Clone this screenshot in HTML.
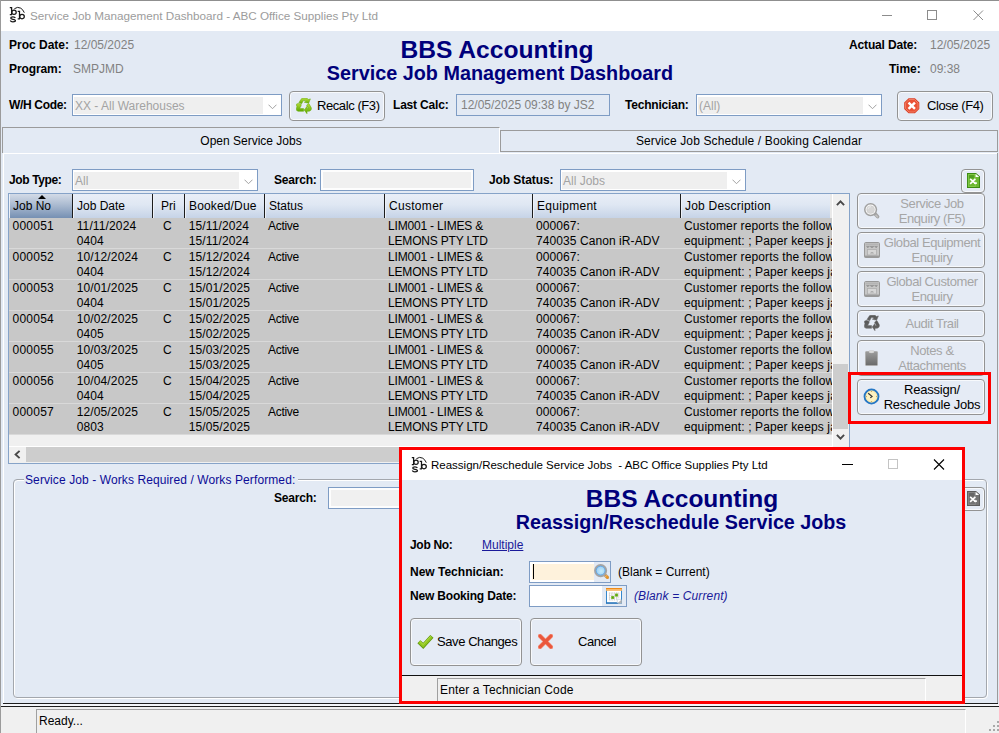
<!DOCTYPE html>
<html>
<head>
<meta charset="utf-8">
<title>Service Job Management Dashboard</title>
<style>
*{box-sizing:border-box;margin:0;padding:0}
html,body{width:999px;height:733px;overflow:hidden;background:#e3eaf4;font-family:"Liberation Sans",sans-serif;font-size:12px;color:#000}
.abs{position:absolute}
.t{position:absolute;white-space:nowrap;line-height:14px;font-size:12px}
.b{font-weight:bold}
.g{color:#828282}
.nv{color:#00007b}
#win{position:absolute;left:0;top:0;width:999px;height:733px;background:#e3eaf4;overflow:hidden}
.combo{position:absolute;height:22px;border:1px solid #7e9cc4;background:#fff}
.combo .in{position:absolute;left:1px;top:2px;bottom:1px;right:18px;background:#efefef}
.combo .tx{position:absolute;left:2px;top:4px;color:#a3a3a3;font-size:12px;line-height:14px;white-space:nowrap}
.combo svg{position:absolute;right:4px;top:9px}
.tbx{position:absolute;height:22px;border:1px solid #7e9cc4;background:#f0f0f0;box-shadow:inset 0 0 0 2px #fdfdfd}
.btn{position:absolute;border:1px solid #939393;border-radius:4px;background:#e5ebf5;box-shadow:inset 0 0 0 1px #f7f9fc}
.bt{position:absolute;white-space:nowrap;font-size:13px;line-height:15px;letter-spacing:-0.42px;text-align:center}
.dis{color:#a6a6a6}
.hd{position:absolute;top:0;height:24px;background:linear-gradient(#e9eef7 0%,#dfe7f3 45%,#c6d3e7 100%);border-right:1px solid #1c1c1c}
.hd span{position:absolute;left:4px;top:5px;font-size:12px;line-height:14px;white-space:nowrap}
.hd:after{content:"";position:absolute;left:0;top:0;width:1px;height:24px;background:#edf1f8}
.row{position:absolute;left:0;width:823px;height:31px;background:#c8c8c8;border-bottom:1px solid #d9d9d9}
.c{position:absolute;top:1px;font-size:12px;line-height:15px;white-space:nowrap}
</style>
</head>
<body>
<div id="win">
<div class="abs" style="left:0;top:0;width:999px;height:31px;background:#fff"></div>
<div class="abs" style="left:0;top:0;width:999px;height:1px;background:#8f8f8f"></div>
<div class="abs" style="left:0;top:0;width:1px;height:733px;background:#9b9b9b"></div>
<svg class="abs" style="left:9px;top:6px" width="18" height="18" viewBox="0 0 18 18"><g fill="none" stroke="#161616" stroke-width="1.25" stroke-linecap="butt"><path d="M0.8 1.6 H2.6 V8.5 M0.8 8.5 H3.0"/><ellipse cx="5.0" cy="6.3" rx="2.2" ry="2.15"/><path d="M6.3 12.0 Q5.9 10.9 3.9 10.9 Q1.7 10.9 1.7 12.1 Q1.7 13.1 3.9 13.3 Q6.4 13.5 6.4 14.7 Q6.4 15.8 3.9 15.8 Q1.8 15.8 1.3 14.5"/><path d="M8.7 5.3 H10.5 V12.8 M8.7 12.8 H10.9"/><ellipse cx="13.0" cy="10.6" rx="2.3" ry="2.15"/></g><path d="M5.4 2.7 Q8.6 0.3 11.8 2.2 Q14.2 3.8 15.3 6.7" fill="none" stroke="#161616" stroke-width="1.0"/></svg>
<div class="t" style="left:30px;top:8px;color:#9c9c9c;font-size:11.7px;line-height:16px">Service Job Management Dashboard - ABC Office Supplies Pty Ltd</div>
<svg class="abs" style="left:880px;top:8px" width="110" height="16" viewBox="0 0 110 16"><g fill="none" stroke="#8c8c8c" stroke-width="1"><path d="M2 7.5 H12"/><rect x="47.5" y="2.5" width="9" height="9"/><path d="M93.5 2.5 L103 12 M103 2.5 L93.5 12"/></g></svg>
<div class="t b" style="left:9px;top:38px">Proc Date:</div>
<div class="t g" style="left:74px;top:38px">12/05/2025</div>
<div class="t b" style="left:9px;top:62px;letter-spacing:-0.1px">Program:</div>
<div class="t g" style="left:73px;top:62px">SMPJMD</div>
<div class="t b nv" style="left:297px;width:400px;text-align:center;top:36px;font-size:24.6px;line-height:28px">BBS Accounting</div>
<div class="t b nv" style="left:300px;width:400px;text-align:center;top:61px;font-size:19.8px;line-height:24px">Service Job Management Dashboard</div>
<div class="t b" style="left:849px;top:38px;letter-spacing:-0.15px">Actual Date:</div>
<div class="t g" style="left:930px;top:38px">12/05/2025</div>
<div class="t b" style="left:889px;top:62px">Time:</div>
<div class="t g" style="left:930px;top:62px">09:38</div>
<div class="t b" style="left:9px;top:98px;letter-spacing:-0.33px">W/H Code:</div>
<div class="combo" style="left:72px;top:94px;width:210px"><div class="in"></div><div class="tx">XX - All Warehouses</div><svg width="9" height="6" viewBox="0 0 9 6"><path d="M0.5 0.7 L4.5 4.7 L8.5 0.7" fill="none" stroke="#a2a2a2" stroke-width="1"/></svg></div>
<div class="btn" style="left:289px;top:91px;width:96px;height:30px"></div>
<svg class="abs" style="left:296px;top:98px" width="16" height="16" viewBox="0 0 16 16"><defs><linearGradient id="rg1" x1="0" y1="0" x2="0" y2="1"><stop offset="0" stop-color="#b5dc3a"/><stop offset="1" stop-color="#5fa800"/></linearGradient></defs><g fill="url(#rg1)" stroke="#5fa800" stroke-width="0.5" stroke-linejoin="round"><path d="M3.0 4.6 L4.9 1.4 Q5.6 0.3 6.9 0.3 L11.2 0.3 L12.3 1.5 L14.4 0.9 L12.6 5.3 L8.3 4.2 L9.7 3.3 L9.0 2.6 L7.4 2.6 L5.6 5.8 Z"/><path d="M2.4 5.2 L5.3 6.6 L5.0 8.0 L3.6 10.6 L7.6 10.6 L7.6 13.3 L2.2 13.3 Q0.2 13.1 0.3 11.0 L0.9 8.6 L0.2 6.4 Z"/><path d="M12.9 5.6 L15.2 9.6 Q15.9 11.1 14.8 12.3 Q14.0 13.3 12.6 13.3 L11.0 13.3 L11.0 15.7 L8.2 12.0 L11.0 8.4 L11.0 10.6 L12.4 10.6 L10.6 7.2 Z"/></g></svg>
<div class="bt" style="left:317px;top:98px">Recalc (F3)</div>
<div class="t b" style="left:393px;top:98px;letter-spacing:-0.19px">Last Calc:</div>
<div class="tbx" style="left:456px;top:94px;width:154px;background:#e3eaf4;box-shadow:none"><div class="t g" style="left:4px;top:3px">12/05/2025 09:38 by JS2</div></div>
<div class="t b" style="left:625px;top:98px;letter-spacing:-0.2px">Technician:</div>
<div class="combo" style="left:696px;top:94px;width:186px"><div class="in"></div><div class="tx">(All)</div><svg width="9" height="6" viewBox="0 0 9 6"><path d="M0.5 0.7 L4.5 4.7 L8.5 0.7" fill="none" stroke="#a2a2a2" stroke-width="1"/></svg></div>
<div class="btn" style="left:897px;top:91px;width:96px;height:30px"></div>
<svg class="abs" style="left:904px;top:98px" width="15.5" height="15.5" viewBox="0 0 16 16"><path d="M4.7 0.2 H11.3 L15.8 4.7 V11.3 L11.3 15.8 H4.7 L0.2 11.3 V4.7 Z" fill="#dc3e23"/><path d="M5.2 1.5 H10.8 L14.5 5.2 V10.8 L10.8 14.5 H5.2 L1.5 10.8 V5.2 Z" fill="#ea5236" stroke="#f49783" stroke-width="0.7"/><path d="M4.7 4.7 L11.3 11.3 M11.3 4.7 L4.7 11.3" stroke="#fff" stroke-width="2.5" stroke-linecap="butt"/></svg>
<div class="bt" style="left:927px;top:98px">Close (F4)</div>
<div class="abs" style="left:2px;top:127px;width:498px;height:26px;border:1px solid #9b9b9b;border-bottom:none;border-right:1px solid #fff;background:#e3eaf4"></div>
<div class="abs" style="left:500px;top:130px;width:498px;height:22px;border:1px solid #9b9b9b;background:#e3eaf4"></div>
<div class="t" style="left:2px;width:498px;text-align:center;top:134px">Open Service Jobs</div>
<div class="t" style="left:500px;width:498px;text-align:center;top:134px;letter-spacing:0.12px">Service Job Schedule / Booking Calendar</div>
<div class="abs" style="left:3px;top:153px;width:994px;height:1px;background:#fff"></div>
<div class="abs" style="left:3px;top:153px;width:1px;height:550px;background:#fff"></div>
<div class="abs" style="left:997px;top:153px;width:1px;height:550px;background:#9b9b9b"></div>
<div class="abs" style="left:3px;top:703px;width:995px;height:1px;background:#1e1e1e"></div>
<div class="t b" style="left:9px;top:173px;letter-spacing:-0.37px">Job Type:</div>
<div class="combo" style="left:72px;top:169px;width:186px"><div class="in"></div><div class="tx">All</div><svg width="9" height="6" viewBox="0 0 9 6"><path d="M0.5 0.7 L4.5 4.7 L8.5 0.7" fill="none" stroke="#a2a2a2" stroke-width="1"/></svg></div>
<div class="t b" style="left:274px;top:173px;letter-spacing:-0.2px">Search:</div>
<div class="tbx" style="left:320px;top:169px;width:154px"></div>
<div class="t b" style="left:489px;top:173px;letter-spacing:-0.08px">Job Status:</div>
<div class="combo" style="left:560px;top:169px;width:186px"><div class="in"></div><div class="tx">All Jobs</div><svg width="9" height="6" viewBox="0 0 9 6"><path d="M0.5 0.7 L4.5 4.7 L8.5 0.7" fill="none" stroke="#a2a2a2" stroke-width="1"/></svg></div>
<div class="btn" style="left:961px;top:169px;width:24px;height:24px"></div>
<svg class="abs" style="left:967px;top:173px" width="13" height="15" viewBox="0 0 14 16"><path d="M0.5 0.5 H9.5 L13.5 4.0 V15.5 H0.5 Z" fill="#6cb832" stroke="#3b8a12" stroke-width="1.1"/><rect x="2.2" y="2.2" width="5.2" height="3.6" fill="#3b8a12" opacity="0.55"/><path d="M1.5 1.5 H9 V14.5 H1.5 Z" fill="none" stroke="#8ed052" stroke-width="0.8" opacity="0.9"/><path d="M9.3 0.8 L13.2 4.2 H9.3 Z" fill="#fff"/><path d="M3.4 6.2 L9.4 11.6 M9.0 6.2 L3.4 11.6" stroke="#fff" stroke-width="1.7"/><path d="M7.5 10.8 H10.8" stroke="#fff" stroke-width="1.6"/></svg>
<div class="abs" style="left:8px;top:193px;width:842px;height:271px;border:1px solid #86a3c8;background:#f0f0f0"></div>
<div class="abs" id="grid" style="left:9px;top:194px;width:823px;height:252px;overflow:hidden">
<div class="hd" style="left:0px;width:64px;background:linear-gradient(#d3dbe7 0%,#aebdd2 42%,#7690b3 100%)"><span style="left:4px">Job No</span></div>
<div class="hd" style="left:64px;width:80px"><span>Job Date</span></div>
<div class="hd" style="left:144px;width:32px"><span style="left:8px">Pri</span></div>
<div class="hd" style="left:176px;width:80px"><span style="letter-spacing:0.15px">Booked/Due</span></div>
<div class="hd" style="left:256px;width:120px"><span>Status</span></div>
<div class="hd" style="left:376px;width:148px"><span style="letter-spacing:0.3px">Customer</span></div>
<div class="hd" style="left:524px;width:148px"><span style="letter-spacing:0.29px">Equipment</span></div>
<div class="hd" style="left:672px;width:149px;border-right:none"><span style="letter-spacing:0.22px">Job Description</span></div>
<div class="abs" style="left:821px;top:0;width:2px;height:24px;background:#e9e9e9"></div>
<svg class="abs" style="left:29px;top:1px" width="8" height="4" viewBox="0 0 8 4"><path d="M0 4 L4 0 L8 4 Z" fill="#000"/></svg>
<div class="row" style="top:24px">
<span class="c" style="left:3.5px;letter-spacing:0.25px">000051</span>
<span class="c" style="left:67.7px;letter-spacing:0.13px">11/11/2024<br>0404</span>
<span class="c" style="left:154px">C</span>
<span class="c" style="left:179.7px;letter-spacing:0.13px">15/11/2024<br>15/11/2024</span>
<span class="c" style="left:259px;letter-spacing:-0.3px">Active</span>
<span class="c" style="left:379px;letter-spacing:-0.18px">LIM001 - LIMES &amp;<br>LEMONS PTY LTD</span>
<span class="c" style="left:527px;letter-spacing:0.08px">000067:<br>740035 Canon iR-ADV</span>
<span class="c" style="left:675px;letter-spacing:0.13px">Customer reports the following<br>equipment: ; Paper keeps jamming</span>
</div>
<div class="row" style="top:55px">
<span class="c" style="left:3.5px;letter-spacing:0.25px">000052</span>
<span class="c" style="left:67.7px;letter-spacing:0.13px">10/12/2024<br>0404</span>
<span class="c" style="left:154px">C</span>
<span class="c" style="left:179.7px;letter-spacing:0.13px">15/12/2024<br>15/12/2024</span>
<span class="c" style="left:259px;letter-spacing:-0.3px">Active</span>
<span class="c" style="left:379px;letter-spacing:-0.18px">LIM001 - LIMES &amp;<br>LEMONS PTY LTD</span>
<span class="c" style="left:527px;letter-spacing:0.08px">000067:<br>740035 Canon iR-ADV</span>
<span class="c" style="left:675px;letter-spacing:0.13px">Customer reports the following<br>equipment: ; Paper keeps jamming</span>
</div>
<div class="row" style="top:86px">
<span class="c" style="left:3.5px;letter-spacing:0.25px">000053</span>
<span class="c" style="left:67.7px;letter-spacing:0.13px">10/01/2025<br>0404</span>
<span class="c" style="left:154px">C</span>
<span class="c" style="left:179.7px;letter-spacing:0.13px">15/01/2025<br>15/01/2025</span>
<span class="c" style="left:259px;letter-spacing:-0.3px">Active</span>
<span class="c" style="left:379px;letter-spacing:-0.18px">LIM001 - LIMES &amp;<br>LEMONS PTY LTD</span>
<span class="c" style="left:527px;letter-spacing:0.08px">000067:<br>740035 Canon iR-ADV</span>
<span class="c" style="left:675px;letter-spacing:0.13px">Customer reports the following<br>equipment: ; Paper keeps jamming</span>
</div>
<div class="row" style="top:117px">
<span class="c" style="left:3.5px;letter-spacing:0.25px">000054</span>
<span class="c" style="left:67.7px;letter-spacing:0.13px">10/02/2025<br>0405</span>
<span class="c" style="left:154px">C</span>
<span class="c" style="left:179.7px;letter-spacing:0.13px">15/02/2025<br>15/02/2025</span>
<span class="c" style="left:259px;letter-spacing:-0.3px">Active</span>
<span class="c" style="left:379px;letter-spacing:-0.18px">LIM001 - LIMES &amp;<br>LEMONS PTY LTD</span>
<span class="c" style="left:527px;letter-spacing:0.08px">000067:<br>740035 Canon iR-ADV</span>
<span class="c" style="left:675px;letter-spacing:0.13px">Customer reports the following<br>equipment: ; Paper keeps jamming</span>
</div>
<div class="row" style="top:148px">
<span class="c" style="left:3.5px;letter-spacing:0.25px">000055</span>
<span class="c" style="left:67.7px;letter-spacing:0.13px">10/03/2025<br>0405</span>
<span class="c" style="left:154px">C</span>
<span class="c" style="left:179.7px;letter-spacing:0.13px">15/03/2025<br>15/03/2025</span>
<span class="c" style="left:259px;letter-spacing:-0.3px">Active</span>
<span class="c" style="left:379px;letter-spacing:-0.18px">LIM001 - LIMES &amp;<br>LEMONS PTY LTD</span>
<span class="c" style="left:527px;letter-spacing:0.08px">000067:<br>740035 Canon iR-ADV</span>
<span class="c" style="left:675px;letter-spacing:0.13px">Customer reports the following<br>equipment: ; Paper keeps jamming</span>
</div>
<div class="row" style="top:179px">
<span class="c" style="left:3.5px;letter-spacing:0.25px">000056</span>
<span class="c" style="left:67.7px;letter-spacing:0.13px">10/04/2025<br>0404</span>
<span class="c" style="left:154px">C</span>
<span class="c" style="left:179.7px;letter-spacing:0.13px">15/04/2025<br>15/04/2025</span>
<span class="c" style="left:259px;letter-spacing:-0.3px">Active</span>
<span class="c" style="left:379px;letter-spacing:-0.18px">LIM001 - LIMES &amp;<br>LEMONS PTY LTD</span>
<span class="c" style="left:527px;letter-spacing:0.08px">000067:<br>740035 Canon iR-ADV</span>
<span class="c" style="left:675px;letter-spacing:0.13px">Customer reports the following<br>equipment: ; Paper keeps jamming</span>
</div>
<div class="row" style="top:210px">
<span class="c" style="left:3.5px;letter-spacing:0.25px">000057</span>
<span class="c" style="left:67.7px;letter-spacing:0.13px">12/05/2025<br>0803</span>
<span class="c" style="left:154px">C</span>
<span class="c" style="left:179.7px;letter-spacing:0.13px">15/05/2025<br>15/05/2025</span>
<span class="c" style="left:259px;letter-spacing:-0.3px">Active</span>
<span class="c" style="left:379px;letter-spacing:-0.18px">LIM001 - LIMES &amp;<br>LEMONS PTY LTD</span>
<span class="c" style="left:527px;letter-spacing:0.08px">000067:<br>740035 Canon iR-ADV</span>
<span class="c" style="left:675px;letter-spacing:0.13px">Customer reports the following<br>equipment: ; Paper keeps jamming</span>
</div>
</div>
<div class="abs" style="left:832px;top:194px;width:1px;height:253px;background:#fff"></div>
<div class="abs" style="left:833px;top:194px;width:16px;height:253px;background:#f0f0f0"></div>
<div class="abs" style="left:833px;top:364px;width:15px;height:65px;background:#cdcdcd"></div>
<svg class="abs" style="left:836px;top:199px" width="9" height="7" viewBox="0 0 9 7"><path d="M0.9 6.2 L4.5 2.4 L8.1 6.2" fill="none" stroke="#484848" stroke-width="1.9"/></svg>
<svg class="abs" style="left:836px;top:434px" width="9" height="7" viewBox="0 0 9 7"><path d="M0.9 0.8 L4.5 4.6 L8.1 0.8" fill="none" stroke="#484848" stroke-width="1.9"/></svg>
<div class="abs" style="left:9px;top:446px;width:823px;height:1px;background:#fff"></div>
<div class="abs" style="left:9px;top:447px;width:840px;height:16px;background:#f0f0f0"></div>
<div class="abs" style="left:26px;top:447px;width:500px;height:15px;background:#cdcdcd"></div>
<svg class="abs" style="left:13px;top:450px" width="8" height="9" viewBox="0 0 8 9"><path d="M6.6 0.9 L2.6 4.5 L6.6 8.1" fill="none" stroke="#484848" stroke-width="1.9"/></svg>
<div class="btn" style="left:857px;top:193px;width:128px;height:36px"></div>
<svg class="abs" style="left:864px;top:203px" width="17" height="17" viewBox="0 0 17 17"><path d="M11.2 11.0 L13.6 13.6" stroke="#a3a3a3" stroke-width="3.6" stroke-linecap="round"/><path d="M12.0 12.4 L13.4 13.8" stroke="#c2c2c2" stroke-width="1.6" stroke-linecap="round"/><circle cx="6.6" cy="6.6" r="5.85" fill="#fbfbfb" stroke="#a1a1a1" stroke-width="1.5"/><circle cx="6.6" cy="6.6" r="3.9" fill="#d6d6d6" stroke="#c9c9c9" stroke-width="0.5"/><path d="M4.0 6.0 Q4.6 3.8 7.0 3.6" fill="none" stroke="#e6e6e6" stroke-width="1.1"/></svg>
<div class="bt dis" style="left:879px;width:106px;top:196px">Service Job<br>Enquiry (F5)</div>
<div class="btn" style="left:857px;top:232px;width:128px;height:36px"></div>
<svg class="abs" style="left:864px;top:242px" width="16" height="16" viewBox="0 0 16 16"><rect x="0.5" y="0.5" width="15" height="15" rx="1.2" fill="#c6c6c6" stroke="#989898"/><rect x="1.5" y="1.5" width="13" height="2" fill="#b4b4b4"/><path d="M2 4.2 H14 L12.2 6 L10.4 4.6 L8 6 L5.6 4.6 L3.8 6 Z" fill="#8a8a8a"/><rect x="3.5" y="7.5" width="9" height="5.5" fill="#d6d6d6" stroke="#adadad" stroke-width="0.8"/><path d="M6 11.5 Q8 8.6 10 11.5 Z" fill="#a8a8a8"/><rect x="0.5" y="13.6" width="15" height="1.9" fill="#9a9a9a"/></svg>
<div class="bt dis" style="left:879px;width:106px;top:235px">Global Equipment<br>Enquiry</div>
<div class="btn" style="left:857px;top:271px;width:128px;height:36px"></div>
<svg class="abs" style="left:864px;top:281px" width="16" height="16" viewBox="0 0 16 16"><rect x="0.5" y="0.5" width="15" height="15" rx="1.2" fill="#c6c6c6" stroke="#989898"/><rect x="1.5" y="1.5" width="13" height="2" fill="#b4b4b4"/><path d="M2 4.2 H14 L12.2 6 L10.4 4.6 L8 6 L5.6 4.6 L3.8 6 Z" fill="#8a8a8a"/><rect x="3.5" y="7.5" width="9" height="5.5" fill="#d6d6d6" stroke="#adadad" stroke-width="0.8"/><path d="M6 11.5 Q8 8.6 10 11.5 Z" fill="#a8a8a8"/><rect x="0.5" y="13.6" width="15" height="1.9" fill="#9a9a9a"/></svg>
<div class="bt dis" style="left:879px;width:106px;top:274px">Global Customer<br>Enquiry</div>
<div class="btn" style="left:857px;top:310px;width:128px;height:27px"></div>
<svg class="abs" style="left:864px;top:315px" width="16" height="16" viewBox="0 0 16 16"><defs><linearGradient id="rg2" x1="0" y1="0" x2="0" y2="1"><stop offset="0" stop-color="#555555"/><stop offset="1" stop-color="#666666"/></linearGradient></defs><g fill="url(#rg2)" stroke="#666666" stroke-width="0.5" stroke-linejoin="round"><path d="M3.0 4.6 L4.9 1.4 Q5.6 0.3 6.9 0.3 L11.2 0.3 L12.3 1.5 L14.4 0.9 L12.6 5.3 L8.3 4.2 L9.7 3.3 L9.0 2.6 L7.4 2.6 L5.6 5.8 Z"/><path d="M2.4 5.2 L5.3 6.6 L5.0 8.0 L3.6 10.6 L7.6 10.6 L7.6 13.3 L2.2 13.3 Q0.2 13.1 0.3 11.0 L0.9 8.6 L0.2 6.4 Z"/><path d="M12.9 5.6 L15.2 9.6 Q15.9 11.1 14.8 12.3 Q14.0 13.3 12.6 13.3 L11.0 13.3 L11.0 15.7 L8.2 12.0 L11.0 8.4 L11.0 10.6 L12.4 10.6 L10.6 7.2 Z"/></g></svg>
<div class="bt dis" style="left:879px;width:106px;top:316px">Audit Trail</div>
<div class="btn" style="left:857px;top:340px;width:128px;height:36px"></div>
<svg class="abs" style="left:865px;top:350px" width="13" height="16" viewBox="0 0 13 16"><defs><linearGradient id="ng" x1="0" y1="0" x2="0" y2="1"><stop offset="0" stop-color="#9c9c9c"/><stop offset="1" stop-color="#6a6a6a"/></linearGradient></defs><rect x="0.5" y="1.5" width="12" height="14" rx="0.8" fill="url(#ng)" stroke="#aeaeae" stroke-width="0.9"/><path d="M4.0 2.4 V1.2 Q4.0 0.5 4.8 0.5 H8.2 Q9.0 0.5 9.0 1.2 V2.4 Q6.5 3.4 4.0 2.4 Z" fill="#dcdcdc" stroke="#c4c4c4" stroke-width="0.4"/></svg>
<div class="bt dis" style="left:879px;width:106px;top:343px">Notes &amp;<br>Attachments</div>
<div class="btn" style="left:857px;top:379px;width:128px;height:36px"></div>
<svg class="abs" style="left:863px;top:388px" width="17" height="17" viewBox="0 0 17 17"><circle cx="8.5" cy="8.5" r="6.9" fill="#fdf2c0" stroke="#2577c5" stroke-width="2.0"/><circle cx="8.5" cy="8.5" r="5.6" fill="none" stroke="#e9d89a" stroke-width="0.6"/><path d="M5.2 5.3 L9.1 8.5 L7.3 9.9" fill="none" stroke="#333" stroke-width="1.1"/><g fill="#b9924a"><rect x="8.1" y="3.0" width="0.8" height="0.9"/><rect x="8.1" y="13.1" width="0.8" height="0.9"/><rect x="3.0" y="8.1" width="0.9" height="0.8"/><rect x="13.1" y="8.1" width="0.9" height="0.8"/></g></svg>
<div class="bt" style="left:879px;width:106px;top:382px;letter-spacing:-0.2px">Reassign/<br>Reschedule Jobs</div>
<div class="abs" style="left:848px;top:372px;width:143px;height:52px;border:3px solid #fd0000"></div>
<div class="abs" style="left:14px;top:480px;width:974px;height:219px;border:1px solid #fff;border-radius:4px"></div>
<div class="abs" style="left:13px;top:479px;width:974px;height:219px;border:1px solid #a3a7ad;border-radius:4px"></div>
<div class="t" style="left:24px;top:473px;color:#0c0c96;background:#e3eaf4;padding:0 3px 0 1px;letter-spacing:0.1px">Service Job - Works Required / Works Performed:</div>
<div class="t b" style="left:274px;top:491px;letter-spacing:-0.2px">Search:</div>
<div class="tbx" style="left:328px;top:487px;width:154px"></div>
<div class="btn" style="left:961px;top:487px;width:24px;height:24px"></div>
<svg class="abs" style="left:967px;top:491px" width="13" height="15" viewBox="0 0 14 16"><path d="M0.5 0.5 H9.5 L13.5 4.0 V15.5 H0.5 Z" fill="#747474" stroke="#5c5c5c" stroke-width="1.1"/><rect x="2.2" y="2.2" width="5.2" height="3.6" fill="#5c5c5c" opacity="0.55"/><path d="M1.5 1.5 H9 V14.5 H1.5 Z" fill="none" stroke="#8e8e8e" stroke-width="0.8" opacity="0.9"/><path d="M9.3 0.8 L13.2 4.2 H9.3 Z" fill="#fff"/><path d="M3.4 6.2 L9.4 11.6 M9.0 6.2 L3.4 11.6" stroke="#fff" stroke-width="1.7"/><path d="M7.5 10.8 H10.8" stroke="#fff" stroke-width="1.6"/></svg>
<div class="abs" style="left:1px;top:704px;width:998px;height:29px;background:#f0f0f0"></div>
<div class="abs" style="left:1px;top:704px;width:998px;height:2px;background:#f4f6f9"></div>
<div class="abs" style="left:1px;top:706px;width:998px;height:1px;background:#1e1e1e"></div>
<div class="abs" style="left:36px;top:709px;width:930px;height:24px;border-left:1px solid #a0a0a0;border-top:1px solid #a0a0a0;border-right:1px solid #fff"></div>
<div class="t" style="left:39px;top:714px">Ready...</div>
<svg class="abs" style="left:989px;top:721px" width="10" height="10" viewBox="0 0 10 10"><g fill="#a9a9a9"><rect x="8" y="0" width="2" height="2"/><rect x="4" y="4" width="2" height="2"/><rect x="8" y="4" width="2" height="2"/><rect x="0" y="8" width="2" height="2"/><rect x="4" y="8" width="2" height="2"/><rect x="8" y="8" width="2" height="2"/></g></svg>
<div class="abs" id="dlg" style="left:399px;top:447px;width:566px;height:257px;border:3px solid #fd0000;background:#e3eaf4;overflow:hidden">
<div class="abs" style="left:0;top:0;width:560px;height:30px;background:#fff"></div>
<svg class="abs" style="left:9px;top:6px" width="18" height="18" viewBox="0 0 18 18"><g fill="none" stroke="#161616" stroke-width="1.25" stroke-linecap="butt"><path d="M0.8 1.6 H2.6 V8.5 M0.8 8.5 H3.0"/><ellipse cx="5.0" cy="6.3" rx="2.2" ry="2.15"/><path d="M6.3 12.0 Q5.9 10.9 3.9 10.9 Q1.7 10.9 1.7 12.1 Q1.7 13.1 3.9 13.3 Q6.4 13.5 6.4 14.7 Q6.4 15.8 3.9 15.8 Q1.8 15.8 1.3 14.5"/><path d="M8.7 5.3 H10.5 V12.8 M8.7 12.8 H10.9"/><ellipse cx="13.0" cy="10.6" rx="2.3" ry="2.15"/></g><path d="M5.4 2.7 Q8.6 0.3 11.8 2.2 Q14.2 3.8 15.3 6.7" fill="none" stroke="#161616" stroke-width="1.0"/></svg>
<div class="t" style="left:29px;top:7px;font-size:11.5px;line-height:16px;color:#000;white-space:pre">Reassign/Reschedule Service Jobs  - ABC Office Supplies Pty Ltd</div>
<svg class="abs" style="left:437px;top:8px" width="110" height="14" viewBox="0 0 110 14"><g fill="none" stroke-width="1"><path d="M3 6.5 H14" stroke="#000"/><rect x="49.5" y="1.5" width="9" height="9" stroke="#c4c4c4"/><path d="M95 1.5 L105 11.5 M105 1.5 L95 11.5" stroke="#000" stroke-width="1.1"/></g></svg>
<div class="t b nv" style="left:80px;width:400px;text-align:center;top:35px;font-size:24.5px;line-height:28px">BBS Accounting</div>
<div class="t b nv" style="left:79px;width:400px;text-align:center;top:60px;font-size:19.7px;line-height:24px">Reassign/Reschedule Service Jobs</div>
<div class="t b" style="left:8px;top:88px;letter-spacing:-0.3px">Job No:</div>
<div class="t" style="left:80px;top:88px;color:#1a1a9a;text-decoration:underline">Multiple</div>
<div class="t b" style="left:8px;top:115px">New Technician:</div>
<div class="abs" style="left:127px;top:111px;width:82px;height:22px;border:1px solid #7e9cc4;background:#fff"><div class="abs" style="left:2px;top:2px;width:62px;height:16px;background:#fef2dc"></div><div class="abs" style="left:64px;top:0;width:16px;height:20px;background:#e3eaf4"></div><div class="abs" style="left:3px;top:2px;width:1px;height:15px;background:#000"></div></div>
<svg class="abs" style="left:192px;top:114px" width="16" height="16" viewBox="0 0 16 16"><defs><radialGradient id="lg" cx="0.55" cy="0.55" r="0.6"><stop offset="0" stop-color="#c4ecfb"/><stop offset="0.7" stop-color="#9fd0f4"/><stop offset="1" stop-color="#5aa5e6"/></radialGradient></defs><path d="M10.8 10.8 L13.3 13.3" stroke="#a9a9a9" stroke-width="3.4" stroke-linecap="round"/><path d="M12.0 12.0 L13.5 13.5" stroke="#e6952a" stroke-width="2.9" stroke-linecap="round"/><path d="M11.6 12.6 L12.6 11.6" stroke="#fbe3bd" stroke-width="0.9"/><circle cx="6.6" cy="6.6" r="5.6" fill="url(#lg)" stroke="#a4a4a4" stroke-width="1.9"/><circle cx="6.6" cy="6.6" r="4.4" fill="none" stroke="#4e9be3" stroke-width="0.7"/></svg>
<div class="t" style="left:216px;top:115px">(Blank = Current)</div>
<div class="t b" style="left:8px;top:139px;letter-spacing:-0.18px">New Booking Date:</div>
<div class="abs" style="left:127px;top:135px;width:98px;height:22px;border:1px solid #7e9cc4;background:#fff"><div class="abs" style="left:72px;top:0;width:24px;height:20px;background:#e3eaf4"></div></div>
<svg class="abs" style="left:204px;top:138px" width="16" height="16" viewBox="0 0 16 16"><rect x="0.5" y="0.5" width="15" height="14.6" fill="#fff" stroke="#3587cc" stroke-width="1"/><rect x="0" y="0" width="16" height="1.1" fill="#f08a16"/><rect x="0" y="1.1" width="16" height="1.7" fill="#f9b25a"/><rect x="0" y="14.4" width="12" height="1.2" fill="#1f6db3"/><g stroke="#bdbdbd" stroke-width="0.7" fill="none" stroke-dasharray="1.4 0.9"><path d="M3.2 5.0 H12.8 M3.2 7.4 H12.8 M3.2 9.8 H12.8 M3.2 12.0 H10.4"/></g><g stroke="#c6c6c6" stroke-width="0.7" fill="none"><path d="M3.4 4.6 V12 M5.8 4.6 V12 M8.2 4.6 V12 M10.6 4.6 V12 M12.8 4.6 V9.8"/></g><rect x="9.0" y="5.6" width="3.0" height="3.0" fill="#79ba2b"/><rect x="9.9" y="6.5" width="1.2" height="1.2" fill="#4f9a10"/><rect x="5.2" y="8.0" width="3.0" height="3.0" fill="#79ba2b"/><rect x="6.1" y="8.9" width="1.2" height="1.2" fill="#4f9a10"/><path d="M11.4 15.6 L15.8 11.2 V15.6 Z" fill="#b4b4b4"/><path d="M11.3 15.0 V11.3 H15.0" fill="#fff" stroke="#c9d3dd" stroke-width="0.8"/></svg>
<div class="t" style="left:232px;top:139px;font-style:italic;color:#1a1a9a;letter-spacing:0.12px">(Blank = Current)</div>
<div class="btn" style="left:8px;top:168px;width:112px;height:48px"></div>
<svg class="abs" style="left:15px;top:184px" width="17" height="15" viewBox="0 0 17 15"><path d="M1.9 7.7 L6.2 11.9 L14.9 2.4" fill="none" stroke="#5f9611" stroke-width="4.3" stroke-linejoin="miter"/><path d="M2.3 7.9 L6.2 11.6 L14.5 2.7" fill="none" stroke="#8fc61f" stroke-width="3.0" stroke-linejoin="miter"/><path d="M2.6 7.2 L6.2 10.6 L13.9 2.2" fill="none" stroke="#b5de4a" stroke-width="0.9"/></svg>
<div class="bt" style="left:35px;top:184px">Save Changes</div>
<div class="btn" style="left:128px;top:168px;width:112px;height:48px"></div>
<svg class="abs" style="left:136px;top:184px" width="15" height="15" viewBox="0 0 15 15"><path d="M1.9 1.9 L13.1 13.1 M13.1 1.9 L1.9 13.1" fill="none" stroke="#f3a392" stroke-width="4.4" stroke-linecap="round"/><path d="M2.1 2.1 L12.9 12.9 M12.9 2.1 L2.1 12.9" fill="none" stroke="#ea573c" stroke-width="3.3" stroke-linecap="round"/></svg>
<div class="bt" style="left:176px;top:184px">Cancel</div>
<div class="abs" style="left:0;top:225px;width:560px;height:1px;background:#111"></div>
<div class="abs" style="left:0;top:226px;width:560px;height:26px;background:#f0f0f0"></div>
<div class="abs" style="left:35px;top:228px;width:489px;height:24px;border-left:1px solid #a0a0a0;border-top:1px solid #a0a0a0;border-right:1px solid #fff"></div>
<div class="t" style="left:38px;top:233px;letter-spacing:0.13px">Enter a Technician Code</div>
</div>
</div>
</body>
</html>
